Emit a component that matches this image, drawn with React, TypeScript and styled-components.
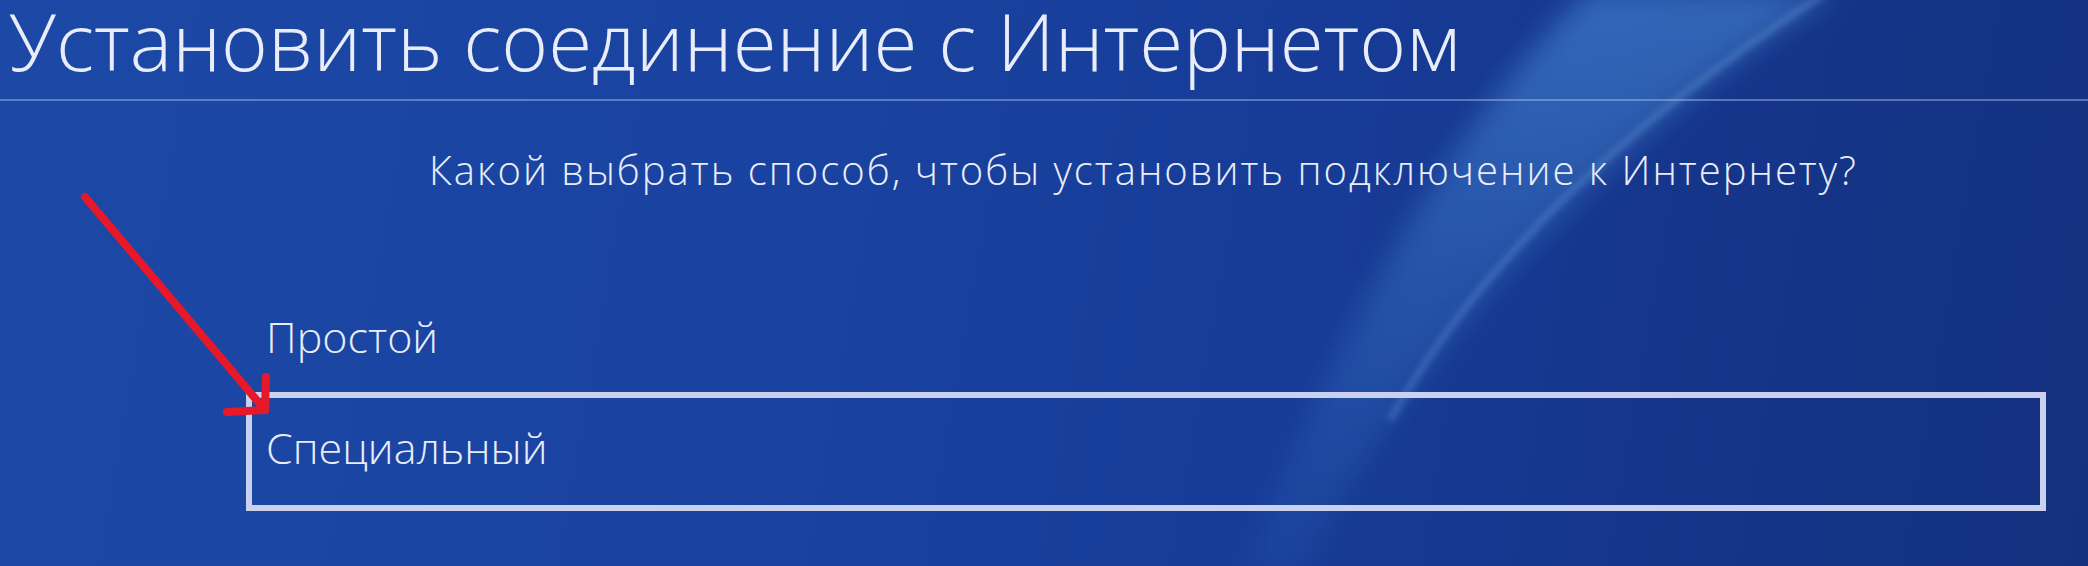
import styled, { createGlobalStyle } from 'styled-components';

const GlobalStyle = createGlobalStyle`
  html, body {
    margin: 0;
    padding: 0;
    background: #14317f;
  }
  body {
    font-family: 'Open Sans', 'Noto Sans', sans-serif;
  }
`;

interface Option {
  id: string;
  label: string;
}

const OPTIONS: Option[] = [
  { id: 'simple', label: 'Простой' },
  { id: 'custom', label: 'Специальный' },
];

export default function App() {
  const selected = 'custom';

  return (
    <>
      <GlobalStyle />
      <Screen>
        <Waves viewBox="0 0 2088 566" preserveAspectRatio="none">
          <defs>
            <filter id="soft" x="-30%" y="-30%" width="160%" height="160%">
              <feGaussianBlur stdDeviation="14" />
            </filter>
            <filter id="thin" x="-20%" y="-20%" width="140%" height="140%">
              <feGaussianBlur stdDeviation="3" />
            </filter>
            <linearGradient id="band" x1="0" y1="0" x2="0" y2="1">
              <stop offset="0" stopColor="#5aaaf5" stopOpacity="0.42" />
              <stop offset="0.5" stopColor="#5aaaf5" stopOpacity="0.22" />
              <stop offset="1" stopColor="#5aaaf5" stopOpacity="0.05" />
            </linearGradient>
          </defs>
          <path
            d="M1590 -10 Q1400 170 1240 580 L1300 580 Q1470 230 1835 -10 Z"
            fill="url(#band)"
            filter="url(#soft)"
          />
          <path
            d="M1830 -10 Q1520 190 1390 420"
            stroke="#9ad4ff"
            strokeOpacity="0.22"
            strokeWidth="7"
            fill="none"
            filter="url(#thin)"
          />
        </Waves>
        <Header>
          <Title>Установить соединение с Интернетом</Title>
        </Header>
        <Question>Какой выбрать способ, чтобы установить подключение к Интернету?</Question>
        <Options>
          {OPTIONS.map((option) => (
            <OptionRow key={option.id} active={option.id === selected}>
              {option.label}
            </OptionRow>
          ))}
        </Options>
        <Arrow viewBox="0 0 300 440">
          <g stroke="#e8182b" strokeWidth="8" strokeLinecap="round" fill="none">
            <line x1="85" y1="197" x2="265" y2="410" />
            <line x1="265" y1="410" x2="266" y2="377" />
            <line x1="265" y1="410" x2="227" y2="412" />
          </g>
        </Arrow>
      </Screen>
    </>
  );
}

const Screen = styled.div`
  position: relative;
  width: 2088px;
  height: 566px;
  overflow: hidden;
  display: flex;
  flex-direction: column;
  color: #e8edf9;
  background: linear-gradient(100deg, #1c48a6 0%, #1a43a1 35%, #173c98 60%, #15358a 80%, #14317f 100%);
`;

const Waves = styled.svg`
  position: absolute;
  inset: 0;
  width: 100%;
  height: 100%;
  pointer-events: none;
`;

const Header = styled.header`
  position: relative;
  height: 99px;
  flex-shrink: 0;
  padding-left: 9px;
  border-bottom: 2px solid rgba(170, 195, 240, 0.45);
`;

const Title = styled.h1`
  margin: 0;
  font-size: 80px;
  font-weight: 300;
  line-height: 80px;
  white-space: nowrap;
`;

const Question = styled.p`
  position: relative;
  margin: 45px 0 0;
  padding-left: 429px;
  font-size: 40px;
  font-weight: 300;
  letter-spacing: 2px;
  line-height: 48px;
  white-space: nowrap;
`;

const Options = styled.ul`
  position: relative;
  list-style: none;
  margin: 95px 42px 0 246px;
  padding: 0;
  display: flex;
  flex-direction: column;
`;

const OptionRow = styled.li<{ active: boolean }>`
  height: ${(props) => (props.active ? '119px' : '103px')};
  box-sizing: border-box;
  padding: 0 0 8px 14px;
  display: flex;
  align-items: center;
  font-size: 43px;
  font-weight: 300;
  white-space: nowrap;
  border: 6px solid ${(props) => (props.active ? '#c9d1ee' : 'transparent')};
`;

const Arrow = styled.svg`
  position: absolute;
  left: 0;
  top: 0;
  width: 300px;
  height: 440px;
  pointer-events: none;
`;
